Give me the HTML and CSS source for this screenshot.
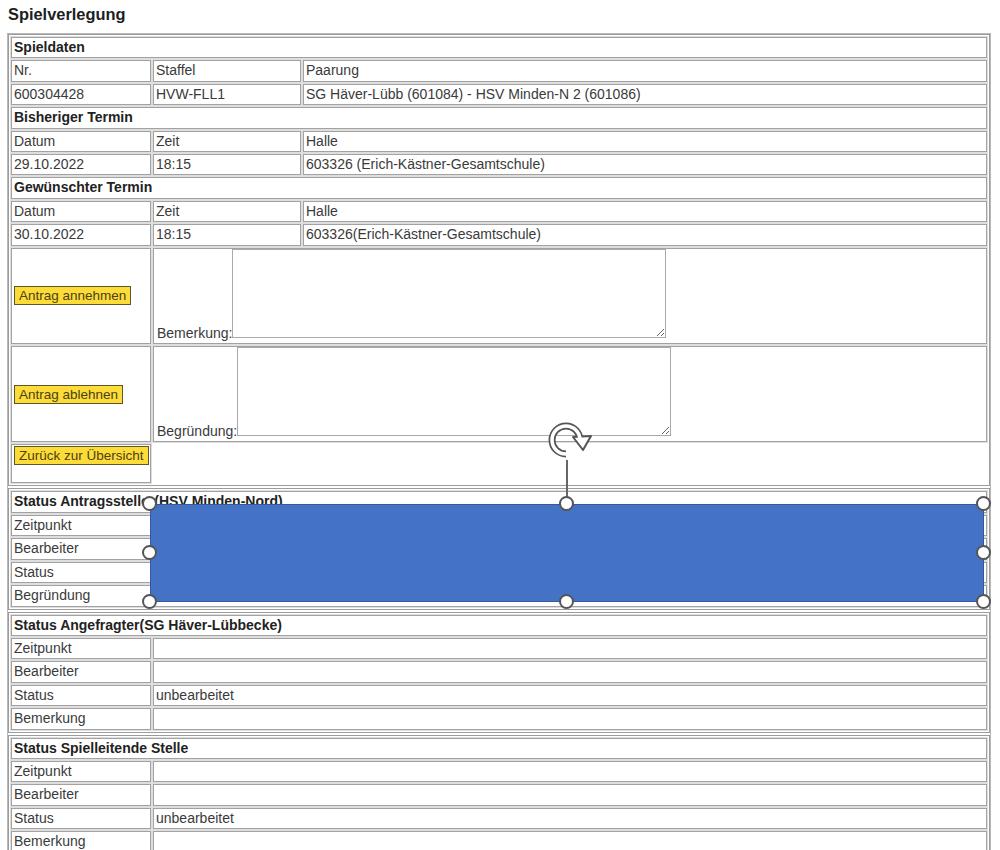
FILE: index.html
```html
<!DOCTYPE html>
<html lang="de">
<head>
    <meta charset="UTF-8">
    <title>Spielverlegung</title>
    <link rel="stylesheet" href="styles.css">
</head>
<body>
    <div class="page">
        <div class="title">Spielverlegung</div>

        <div class="frame">
            <!-- Spieldaten und Termine -->
            <table class="grid">
                <colgroup><col class="c-label"><col class="c-mid"><col></colgroup>
                <tr><td class="head" colspan="3">Spieldaten</td></tr>
                <tr><td>Nr.</td><td>Staffel</td><td>Paarung</td></tr>
                <tr><td>600304428</td><td>HVW-FLL1</td><td>SG Häver-Lübb (601084) - HSV Minden-N 2 (601086)</td></tr>
                <tr><td class="head" colspan="3">Bisheriger Termin</td></tr>
                <tr><td>Datum</td><td>Zeit</td><td>Halle</td></tr>
                <tr><td>29.10.2022</td><td>18:15</td><td>603326 (Erich-Kästner-Gesamtschule)</td></tr>
                <tr><td class="head" colspan="3">Gewünschter Termin</td></tr>
                <tr><td>Datum</td><td>Zeit</td><td>Halle</td></tr>
                <tr><td>30.10.2022</td><td>18:15</td><td>603326(Erich-Kästner-Gesamtschule)</td></tr>
                <tr class="action">
                    <td><button class="btn">Antrag annehmen</button></td>
                    <td colspan="2">Bemerkung:<textarea class="note"></textarea></td>
                </tr>
                <tr class="action">
                    <td><button class="btn">Antrag ablehnen</button></td>
                    <td colspan="2">Begründung:<textarea class="note"></textarea></td>
                </tr>
                <tr class="back">
                    <td><button class="btn">Zurück zur Übersicht</button></td>
                </tr>
            </table>

            <table class="grid">
                <colgroup><col class="c-label"><col></colgroup>
                <tr><td class="head" colspan="2">Status Antragssteller(HSV Minden-Nord)</td></tr>
                <tr><td>Zeitpunkt</td><td></td></tr>
                <tr><td>Bearbeiter</td><td></td></tr>
                <tr><td>Status</td><td></td></tr>
                <tr><td>Begründung</td><td></td></tr>
            </table>

            <table class="grid">
                <colgroup><col class="c-label"><col></colgroup>
                <tr><td class="head" colspan="2">Status Angefragter(SG Häver-Lübbecke)</td></tr>
                <tr><td>Zeitpunkt</td><td></td></tr>
                <tr><td>Bearbeiter</td><td></td></tr>
                <tr><td>Status</td><td>unbearbeitet</td></tr>
                <tr><td>Bemerkung</td><td></td></tr>
            </table>

            <table class="grid">
                <colgroup><col class="c-label"><col></colgroup>
                <tr><td class="head" colspan="2">Status Spielleitende Stelle</td></tr>
                <tr><td>Zeitpunkt</td><td></td></tr>
                <tr><td>Bearbeiter</td><td></td></tr>
                <tr><td>Status</td><td>unbearbeitet</td></tr>
                <tr><td>Bemerkung</td><td></td></tr>
            </table>
        </div>

        <!-- selected rectangle shape lying over the status block -->
        <div class="shape">
            <svg class="rotate" width="60" height="44" viewBox="0 0 60 44">
                <path d="M20 35 A14 14 0 1 1 34 21" fill="none" stroke="#555" stroke-width="7"/>
                <polygon points="27,18 45,17 37,31" fill="#fff" stroke="#555" stroke-width="2" stroke-linejoin="round"/>
                <path d="M20 35 A14 14 0 1 1 34 21" fill="none" stroke="#fff" stroke-width="3.5"/>
            </svg>
            <div class="stem"></div>
            <span class="handle h-tl"></span>
            <span class="handle h-tm"></span>
            <span class="handle h-tr"></span>
            <span class="handle h-ml"></span>
            <span class="handle h-mr"></span>
            <span class="handle h-bl"></span>
            <span class="handle h-bm"></span>
            <span class="handle h-br"></span>
        </div>
    </div>
</body>
</html>
```

FILE: styles.css
```css
body {
    margin: 0;
    font-family: "Liberation Sans", Arial, sans-serif;
    font-size: 14px;
    color: #3a3a3a;
    background: #fff;
}
.page {
    position: relative;
    padding: 4px 9px 0 7px;
}
.title {
    font-size: 16.4px;
    font-weight: bold;
    line-height: 20px;
    padding-left: 1px;
    margin-bottom: 9px;
    color: #1e1e1e;
}
.frame {
    border: 1px solid #b8b8b8;
}
.grid {
    width: 100%;
    table-layout: fixed;
    border-collapse: separate;
    border-spacing: 2px;
    border: 1px solid #9c9c9c;
}
.grid + .grid {
    margin-top: 2px;
}
.c-label {
    width: 140px;
}
.c-mid {
    width: 148px;
}
.grid td {
    border: 1px solid #a2a2a2;
    box-shadow: 0 0 0 1px #dedede;
    padding: 0 2px;
    line-height: 19.4px;
    white-space: nowrap;
    overflow: hidden;
}
.grid td.head {
    font-weight: bold;
    color: #222;
}
.action td + td {
    padding-left: 3px;
}
.note {
    width: 434px;
    height: 89px;
    margin: 0;
    padding: 2px;
    box-sizing: border-box;
    border: 1px solid #a9a9a9;
    font: inherit;
}
.btn {
    font-family: inherit;
    font-size: 13.5px;
    line-height: 15px;
    padding: 1px 4px;
    margin: 0;
    background: #fddc3a;
    color: #4a4212;
    border: 1px solid #5e5628;
}
.back td {
    vertical-align: top;
    height: 36px;
    padding-top: 1px;
}

/* shape selection */
.shape {
    position: absolute;
    left: 150px;
    top: 504px;
    width: 834px;
    height: 98px;
    background: #4472c4;
    box-shadow: inset 0 0 0 1px #36599a;
}
.rotate {
    position: absolute;
    left: 396px;
    top: -85px;
}
.stem {
    position: absolute;
    left: 416px;
    top: -44px;
    width: 2px;
    height: 38px;
    background: #666;
}
.handle {
    position: absolute;
    width: 11px;
    height: 11px;
    margin: -8px 0 0 -8px;
    border: 2.5px solid #555;
    border-radius: 50%;
    background: #fff;
}
.h-tl { left: 0; top: 0; }
.h-tm { left: 50%; top: 0; }
.h-tr { left: 100%; top: 0; }
.h-ml { left: 0; top: 50%; }
.h-mr { left: 100%; top: 50%; }
.h-bl { left: 0; top: 100%; }
.h-bm { left: 50%; top: 100%; }
.h-br { left: 100%; top: 100%; }
```
